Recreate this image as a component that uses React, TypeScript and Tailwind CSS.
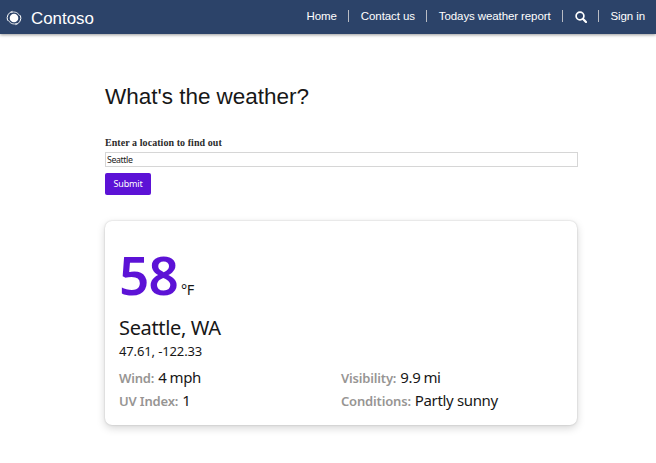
import React from "react";

const sans = "font-['Liberation_Sans',Arial,sans-serif]";
const ui = "font-['Noto_Sans','Open_Sans',sans-serif]";

function Divider({ className }: { className: string }) {
  return <span className={`mb-[2px] h-[12px] w-px bg-[#b9bcc4] ${className}`} />;
}

function Header() {
  return (
    <header
      className={`flex h-[34px] items-center bg-[#2c4369] text-white shadow-[0_1px_3px_rgba(0,0,0,0.4)] ${sans}`}
    >
      <svg className="ml-[6px] mt-px h-4 w-4 shrink-0" viewBox="0 0 16 16" fill="none" stroke="#fff">
        <circle cx="8" cy="8" r="4.3" fill="#fff" stroke="none" />
        <path d="M1.6 10.6A7 7 0 0 1 6.6 1.3" strokeWidth="1" />
        <path d="M14.4 5.4A7 7 0 0 1 9.4 14.7" strokeWidth="1" />
        <path d="M5.2 2.6A6.1 6.1 0 0 1 13.6 5.8" strokeWidth="0.8" />
        <path d="M10.8 13.4A6.1 6.1 0 0 1 2.4 10.2" strokeWidth="0.8" />
      </svg>
      <span className="ml-[9px] mt-[3px] w-[64px] text-[16.9px] leading-[20px]">Contoso</span>
      <nav className="ml-auto flex items-center whitespace-nowrap pr-[11px] text-[11.5px] leading-[14px] tracking-[-0.1px]">
        <a className="mb-[2px]">Home</a>
        <Divider className="ml-[11px] mr-[12px]" />
        <a className="mb-[2px]">Contact us</a>
        <Divider className="ml-[11px] mr-[12px]" />
        <a className="mb-[2px]">Todays weather report</a>
        <Divider className="ml-[11px] mr-[12px]" />
        <svg className="mb-px h-[12px] w-[12px]" viewBox="0 0 12 12" fill="none" stroke="#fff">
          <circle cx="5" cy="5" r="3.9" strokeWidth="1.7" />
          <path d="M7.8 7.8L11 11" strokeWidth="2.2" strokeLinecap="round" />
        </svg>
        <Divider className="ml-[11px] mr-[12px]" />
        <a className="mb-[2px]">Sign in</a>
      </nav>
    </header>
  );
}

function Stat({ label, value }: { label: string; value: React.ReactNode }) {
  return (
    <div className="flex h-[23px] items-baseline whitespace-nowrap leading-[23px]">
      <span className="text-[13px] font-semibold tracking-[-0.17px] text-[#979593]">{label}</span>
      <span className="ml-[4px] text-[15px] tracking-[-0.35px] text-[#171717]">{value}</span>
    </div>
  );
}

export default function App() {
  return (
    <div className="h-[463px] w-[656px] overflow-hidden bg-white">
      <Header />
      <main className="ml-[105px] w-[473px] pt-[48px]">
        <h1 className={`h-[30px] text-[22.5px] leading-[30px] tracking-[-0.02px] text-[#171717] ${sans}`}>What's the weather?</h1>
        <form className="mt-[24px]">
          <label className="block h-[14px] font-['Liberation_Serif','Times_New_Roman',serif] text-[10px] font-bold leading-[14px] tracking-[0.06px] text-[#2b2b2b]">
            Enter a location to find out
          </label>
          <input
            defaultValue="Seattle"
            className={`mt-[2px] block h-[15px] w-[473px] border border-[#d6d6d6] px-px text-[8.8px] leading-[13px] tracking-[-0.4px] text-[#222] outline-none ${ui}`}
          />
          <button
            type="button"
            className={`mt-[6px] block h-[22px] w-[46px] rounded-[2px] bg-[#5c12d6] text-[9px] leading-[22px] tracking-[-0.15px] text-white ${ui}`}
          >
            Submit
          </button>
        </form>
        <section
          className={`mt-[26px] h-[204px] w-[472px] rounded-[7px] bg-white px-[14px] pt-[17px] text-[#171717] shadow-[0_0_2px_rgba(0,0,0,0.2),0_3px_9px_rgba(0,0,0,0.17)] ${ui}`}
        >
          <div className="flex h-[74px] items-baseline leading-[74px]">
            <span className="text-[53px] font-semibold tracking-[-0.8px] text-[#5c12d6]">58</span>
            <span className="ml-[3px] text-[14.5px] tracking-[-0.5px]">°F</span>
          </div>
          <h2 className="h-[30px] whitespace-nowrap text-[20px] leading-[32px] tracking-[-0.35px]">Seattle, WA</h2>
          <p className="h-[18px] text-[13px] leading-[18px] tracking-[-0.13px]">47.61, -122.33</p>
          <div className="mt-[6px] grid grid-cols-[222px_1fr]">
            <Stat label="Wind:" value={<>4<span className="ml-[3px]">mph</span></>} />
            <Stat label="Visibility:" value={<>9.9<span className="ml-[3px]">mi</span></>} />
            <Stat label="UV Index:" value="1" />
            <Stat label="Conditions:" value="Partly sunny" />
          </div>
        </section>
      </main>
    </div>
  );
}
